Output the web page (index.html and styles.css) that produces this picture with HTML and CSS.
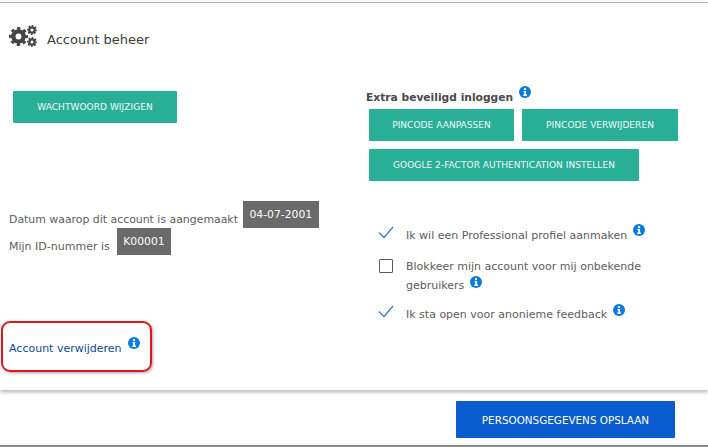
FILE: index.html
```html
<!DOCTYPE html>
<html lang="nl">
<head>
  <meta charset="UTF-8" />
  <title>Account beheer</title>
  <link rel="stylesheet" href="styles.css">
</head>
<body>
  <svg class="icon-defs" width="0" height="0">
    <symbol id="info" viewBox="0 0 12 12">
      <circle cx="6" cy="6" r="6" fill="#0a7ae0" />
      <circle cx="6" cy="3.1" r="1.2" fill="#fff" />
      <path d="M4.5 5h2.6v3.6h.9V10H4.3V8.6h1V6.3h-.8z" fill="#fff" />
    </symbol>
    <symbol id="check" viewBox="0 0 16 13">
      <path d="M1 6.5l5 5L15 1" fill="none" stroke="#3f6fe0" stroke-width="1.2" />
    </symbol>
    <symbol id="gear" viewBox="0 0 24 24">
      <circle cx="12" cy="12" r="6.5" fill="none" stroke="#444" stroke-width="5.5" />
      <circle cx="12" cy="12" r="10" fill="none" stroke="#444" stroke-width="4" stroke-dasharray="4 3.85" stroke-dashoffset="2" />
    </symbol>
  </svg>

  <div class="card">
    <div class="card-head">
      <div class="gears">
        <svg class="gear-big"><use href="#gear" /></svg>
        <svg class="gear-small gear-top"><use href="#gear" /></svg>
        <svg class="gear-small gear-bottom"><use href="#gear" /></svg>
      </div>
      <h1>Account beheer</h1>
    </div>

    <div class="columns">
      <div class="col-left">
        <a class="btn btn-password">WACHTWOORD WIJZIGEN</a>

        <div class="facts">
          <div class="fact">
            <span>Datum waarop dit account is aangemaakt</span>
            <span class="badge">04-07-2001</span>
          </div>
          <div class="fact fact-id">
            <span>Mijn ID-nummer is</span>
            <span class="badge">K00001</span>
          </div>
        </div>

        <div class="delete">
          <a class="delete-link">Account verwijderen</a>
          <svg class="info info-delete"><use href="#info" /></svg>
          <div class="highlight"></div>
        </div>
      </div>

      <div class="col-right">
        <div class="extra-title">
          <b>Extra beveiligd inloggen</b>
          <svg class="info info-title"><use href="#info" /></svg>
        </div>
        <div class="btn-row">
          <a class="btn btn-pin-edit">PINCODE AANPASSEN</a>
          <a class="btn btn-pin-del">PINCODE VERWIJDEREN</a>
        </div>
        <div class="btn-row">
          <a class="btn btn-google">GOOGLE 2-FACTOR AUTHENTICATION INSTELLEN</a>
        </div>

        <ul class="options">
          <li class="option option-first">
            <svg class="check"><use href="#check" /></svg>
            <span>Ik wil een Professional profiel aanmaken</span>
            <svg class="info"><use href="#info" /></svg>
          </li>
          <li class="option option-block">
            <span class="checkbox"></span>
            <span class="option-text">Blokkeer mijn account voor mij onbekende gebruikers<svg class="info info-inline"><use href="#info" /></svg></span>
          </li>
          <li class="option">
            <svg class="check"><use href="#check" /></svg>
            <span>Ik sta open voor anonieme feedback</span>
            <svg class="info"><use href="#info" /></svg>
          </li>
        </ul>
      </div>
    </div>
  </div>

  <div class="footer">
    <a class="btn-save">PERSOONSGEGEVENS OPSLAAN</a>
  </div>
</body>
</html>
```

FILE: styles.css
```css
:root {
  --teal: #29ae98;
  --text: #5c5c5c;
  --badge: #6a6a6a;
  --blue: #0a5bd0;
}

* {
  box-sizing: border-box;
  margin: 0;
  padding: 0;
}

html, body {
  height: 100%;
}

body {
  font-family: 'DejaVu Sans', Verdana, sans-serif;
  font-size: 11px;
  color: var(--text);
  background: #fff;
  width: 708px;
  height: 447px;
  overflow: hidden;
  display: flex;
  flex-direction: column;
  padding-top: 2px;
  border-bottom: 2px solid #8a8a8a;
}

.icon-defs {
  position: absolute;
}

.card {
  height: 388px;
  border-top: 1px solid #b5b5b5;
  box-shadow: 0 2px 4px rgba(0,0,0,0.3);
}

.card-head {
  display: flex;
  align-items: center;
  padding: 24px 0 0 9px;
  height: 49px;
}

.gears {
  position: relative;
  width: 28px;
  height: 22px;
  margin: -7px 10px 0 0;
}

.gears svg {
  position: absolute;
}

.gear-big {
  left: 0;
  top: 2px;
  width: 19px;
  height: 19px;
}

.gear-small {
  left: 18px;
  width: 10px;
  height: 10px;
}

.gear-top { top: 0; }
.gear-bottom { top: 12px; }

h1 {
  font-size: 13px;
  font-weight: normal;
  color: #3c3c3c;
}

.columns {
  display: flex;
}

.col-left {
  width: 366px;
}

.col-right {
  flex: 1;
}

.btn {
  display: flex;
  align-items: center;
  justify-content: center;
  height: 32px;
  background: var(--teal);
  color: #f2fbf9;
  font-size: 9px;
  letter-spacing: 0.05px;
  border-radius: 1px;
}

.btn-password {
  width: 164px;
  margin: 39px 0 0 13px;
}

.facts {
  margin: 78px 0 0 9px;
  font-size: 10.9px;
}

.fact {
  display: flex;
  align-items: center;
  gap: 5px;
}

.fact span:first-child {
  position: relative;
  top: 5px;
}

.fact-id {
  font-size: 11px;
  gap: 7px;
}

.badge {
  background: var(--badge);
  color: #fff;
  font-size: 10.8px;
  height: 27px;
  padding: 0 6.5px;
  display: flex;
  align-items: center;
}

.delete {
  position: relative;
  display: flex;
  margin: 87px 0 0 9px;
  height: 16px;
}

.delete-link {
  color: #0a4a9a;
  font-size: 11px;
}

.info {
  width: 12px;
  height: 12px;
  flex-shrink: 0;
}

.info-delete {
  margin: -5px 0 0 6px;
}

.highlight {
  position: absolute;
  left: -8px;
  top: -21px;
  width: 151px;
  height: 51px;
  border: 2px solid #e0141c;
  border-radius: 9px;
  box-shadow: 1px 1px 3px rgba(0,0,0,0.35);
}

.extra-title {
  display: flex;
  margin-top: 34px;
  height: 23px;
  padding-top: 5px;
}

.extra-title b {
  font-size: 10.7px;
  color: #4a4a4a;
}

.info-title {
  margin: -5px 0 0 6px;
}

.btn-row {
  display: flex;
  gap: 8px;
  margin: 0 0 8px 3px;
}

.btn-pin-edit { width: 145px; }
.btn-pin-del { width: 156px; }
.btn-google { width: 270px; }

.options {
  list-style: none;
  margin: 47px 0 0 12px;
}

.option {
  display: flex;
  align-items: flex-start;
  height: 24px;
  line-height: 16px;
}

.option-first {
  margin-bottom: 5px;
}

.option-block {
  height: 50px;
  line-height: 19px;
}

.check {
  width: 16px;
  height: 13px;
  margin: -2px 12px 0 0;
}

.option .info {
  margin: -3px 0 0 6px;
}

.option-first .info {
  margin-top: -4px;
}

.checkbox {
  width: 14px;
  height: 14px;
  border: 1.5px solid #5a5a5a;
  border-radius: 1px;
  margin: 2px 13px 0 1px;
  flex-shrink: 0;
}

.option-text {
  width: 270px;
}

.option .info-inline {
  margin: 0 0 8px 6px;
  vertical-align: middle;
}

.footer {
  flex: 1;
  display: flex;
  justify-content: flex-end;
  padding: 11px 33px 0 0;
}

.btn-save {
  display: flex;
  align-items: center;
  justify-content: center;
  width: 219px;
  height: 37px;
  background: var(--blue);
  color: #fff;
  font-size: 10.4px;
  border-radius: 1px;
}
```
